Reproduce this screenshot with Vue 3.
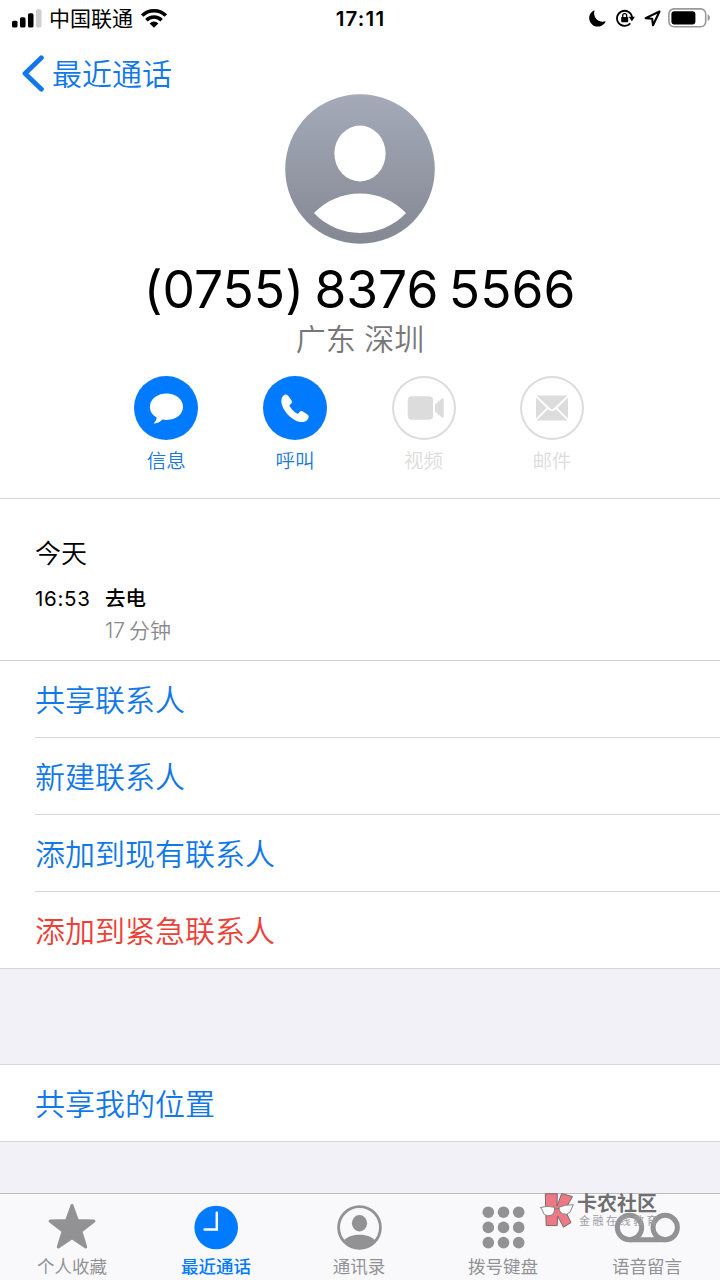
<template>
  <div class="phone">
    <header class="status">
      <div class="status-left">
        <svg class="signal" width="30" height="19" viewBox="0 0 30 19">
          <rect x="0" y="11.7" width="5.5" height="6.8" rx="1.6" />
          <rect x="8" y="8.3" width="5.5" height="10.2" rx="1.6" />
          <rect x="16" y="4.3" width="5.5" height="14.2" rx="1.6" />
          <rect x="24" y="0.2" width="5.5" height="18.3" rx="1.6" fill="#cfcfcf" />
        </svg>
        <span class="carrier">中国联通</span>
        <svg class="wifi" width="26" height="19" viewBox="0 0 26 19">
          <g fill="none" stroke="#000" stroke-width="3.5">
            <path d="M1.2 6.6A16.8 16.8 0 0 1 24.8 6.6" />
            <path d="M5.4 11.2A10.8 10.8 0 0 1 20.6 11.2" />
          </g>
          <path d="M13 18.8L8.6 14.4A6.2 6.2 0 0 1 17.4 14.4Z" />
        </svg>
      </div>
      <span class="clock">17:11</span>
      <div class="status-right">
        <svg width="17" height="17" viewBox="0 0 17 17">
          <path d="M5.6 0.3C2.4 1.5 0.2 4.5 0.2 8C0.2 12.8 4 16.6 8.8 16.6C12.4 16.6 15.5 14.5 16.7 11.3C9.8 13.6 3.2 7.4 5.6 0.3Z" />
        </svg>
        <svg class="lock" width="19" height="18" viewBox="0 0 19 18">
          <path d="M14.3 14.4A7.6 7.6 0 1 1 16.1 8.1" fill="none" stroke="#000" stroke-width="1.8" />
          <path d="M12.7 7.7H19L15.9 12.2Z" />
          <rect x="5.2" y="7.9" width="7" height="5.3" rx="0.7" />
          <path d="M6.7 8V6.7a2 2 0 0 1 4 0V8" fill="none" stroke="#000" stroke-width="1.3" />
        </svg>
        <svg class="arrow" width="17" height="17" viewBox="0 0 17 17">
          <path d="M15.5 1.5L1.6 8.1L8.2 8.8L9 15.3Z" fill="none" stroke="#000" stroke-width="2.1" stroke-linejoin="round" />
        </svg>
        <svg class="battery" width="43" height="20" viewBox="0 0 43 20">
          <rect x="0.9" y="0.9" width="36.8" height="17.8" rx="5" fill="none" stroke="#999" stroke-width="1.6" />
          <rect x="3.4" y="3.2" width="24" height="13.2" rx="3" />
          <path d="M39.6 6.5C42.7 7.4 42.7 12.2 39.6 13.1Z" fill="#999" />
        </svg>
      </div>
    </header>

    <nav class="back">
      <svg width="24" height="37" viewBox="0 0 24 37">
        <path d="M20.4 2.8L4 18.5L20.4 34.2" fill="none" stroke="#1278e8" stroke-width="4.8" stroke-linecap="round" stroke-linejoin="round" />
      </svg>
      <span>最近通话</span>
    </nav>

    <section class="profile">
      <svg class="avatar" width="150" height="150" viewBox="0 0 150 150">
        <defs>
          <linearGradient id="avatarFill" x1="0" y1="0" x2="0" y2="1">
            <stop offset="0" stop-color="#a5aab9" />
            <stop offset="1" stop-color="#848893" />
          </linearGradient>
        </defs>
        <circle cx="75" cy="75" r="74.8" fill="url(#avatarFill)" />
        <ellipse cx="75" cy="59.5" rx="25.6" ry="28" fill="#fff" />
        <path d="M29 119C54 93 96 93 121 119C96 145.5 54 145.5 29 119Z" fill="#fff" />
      </svg>
      <h1>(0755) 8376 5566</h1>
      <p class="region">广东 深圳</p>
      <div class="actions">
        <div v-for="item in actions" :key="item.icon" class="action" :class="{ disabled: item.disabled }">
          <div class="circle">
            <svg width="64" height="64" viewBox="0 0 64 64">
              <path
                v-if="item.icon === 'message'"
                d="M32.5 17.6C41.8 17.6 49 23.2 49 30.8C49 38.5 42 43.9 32.5 43.9C31 43.9 29.6 43.8 28.3 43.5C26.5 45.6 23.6 47.3 20.9 47.5C19.8 47.5 19.9 46.8 20.5 46.2C21.8 45 22.7 43.5 22.7 41.6C18.5 39.3 15.9 35.5 15.9 30.8C15.9 23.2 23.2 17.6 32.5 17.6Z"
              />
              <path
                v-else-if="item.icon === 'phone'"
                d="M20.8 19.2C22.6 18 24.2 18.5 25.4 20.1L28.4 24.3C29.4 25.8 29 27 27.9 27.9L26.9 28.7C26.3 29.2 26.4 29.8 26.8 30.5C28.6 33.3 30.9 35.6 33.9 37.4C34.6 37.8 35.2 37.8 35.6 37.2L36.5 36.1C37.3 35.1 38.5 34.7 39.9 35.6L44.4 38.6C46 39.7 46.1 41.2 45 42.9C43.4 45.2 41.2 46.1 38.7 46.1C30 46 18.4 34 18.4 25.5C18.4 23 18.8 20.7 20.8 19.2Z"
              />
              <g v-else-if="item.icon === 'video'">
                <rect x="15.7" y="20.3" width="25.4" height="23.4" rx="4" />
                <path d="M43 28.6L49.5 22.8C50.5 21.9 51.7 22.2 51.7 23.7V40.2C51.7 41.7 50.5 42.1 49.5 41.2L43 35.4Z" />
              </g>
              <g v-else>
                <rect x="16" y="19.6" width="32" height="24.9" rx="1" />
                <path
                  d="M15.5 19.8L29.5 33.2Q32 35.5 34.5 33.2L48.5 19.8M15.5 44.3L27.9 31.8M48.5 44.3L36.1 31.8"
                  fill="none"
                  stroke="#fff"
                  stroke-width="1.9"
                />
              </g>
            </svg>
          </div>
          <span>{{ item.label }}</span>
        </div>
      </div>
    </section>

    <section class="history">
      <h2>今天</h2>
      <div class="call">
        <span class="time">16:53</span>
        <div class="detail">
          <strong>去电</strong>
          <span class="duration">17<i></i>分钟</span>
        </div>
      </div>
    </section>

    <ul class="links">
      <li v-for="link in links" :key="link.label" :class="{ danger: link.danger }">{{ link.label }}</li>
    </ul>
    <div class="spacer"></div>
    <div class="location">共享我的位置</div>

    <footer class="tabs">
      <div v-for="tab in tabs" :key="tab.icon" class="tab" :class="{ active: tab.active }">
        <svg width="70" height="48" viewBox="0 0 70 48">
          <path
            v-if="tab.icon === 'star'"
            d="M35 2.5L40.4 17.6L56.9 18.1L43.9 28.2L48.7 44L35 34.7L21.3 44L26.1 28.2L13.1 18.1L29.6 17.6Z"
            stroke="currentColor"
            stroke-width="3"
            stroke-linejoin="round"
          />
          <g v-else-if="tab.icon === 'recent'">
            <circle cx="35.2" cy="24.5" r="21.8" />
            <path d="M35.8 9.8V26.4H23.6" fill="none" stroke="#fff" stroke-width="2.5" stroke-linecap="round" />
          </g>
          <g v-else-if="tab.icon === 'contacts'">
            <circle cx="34.5" cy="24.5" r="20.9" fill="none" stroke="currentColor" stroke-width="2.8" />
            <ellipse cx="34.5" cy="20.2" rx="7.6" ry="8.2" />
            <path d="M19.2 37C26.2 30 42.8 30 49.8 37C42.2 48.5 26.8 48.5 19.2 37Z" />
          </g>
          <g v-else-if="tab.icon === 'keypad'">
            <circle v-for="n in 9" :key="n" :cx="19.3 + ((n - 1) % 3) * 15.2" :cy="9.2 + Math.floor((n - 1) / 3) * 15.2" r="5.8" />
          </g>
          <g v-else fill="none" stroke="currentColor" stroke-width="5">
            <circle cx="16.5" cy="24.5" r="12.2" />
            <circle cx="52.2" cy="24.5" r="12.2" />
            <path d="M16.5 36.7H52.2" />
          </g>
        </svg>
        <span>{{ tab.label }}</span>
      </div>
    </footer>

    <div class="watermark">
      <svg width="34" height="37" viewBox="0 0 34 37">
        <path
          d="M5.3 1.8H17.3L17 14L21.7 1.6L32.5 4.6L24.8 18L31 30.5L23.5 35.2L17.6 24L17.2 33.6H6.2Z"
          fill="#ec7983"
          stroke="#79686d"
          stroke-width="1"
        />
        <path d="M0.5 15.5Q7 13.4 14.2 15.2Q15.6 18.2 13.6 21.3Q11.3 24.2 7.2 23.8Q2.8 22.8 2.3 18Z" fill="#fff" stroke="#777" stroke-width="0.9" />
        <path d="M19.2 15.2Q25 12.4 33.3 12.8L31.8 16Q31 21 26.6 22.2Q22 22.8 20 19.6Q18.8 17.3 19.2 15.2ZM15 17L19 16.3" fill="#fff" stroke="#777" stroke-width="0.9" />
      </svg>
      <div class="watermark-text">
        <b>卡农社区</b>
        <small>金融在线教育</small>
      </div>
    </div>
  </div>
</template>

<script setup>
const actions = [
  { icon: "message", label: "信息" },
  { icon: "phone", label: "呼叫" },
  { icon: "video", label: "视频", disabled: true },
  { icon: "mail", label: "邮件", disabled: true },
];

const links = [
  { label: "共享联系人" },
  { label: "新建联系人" },
  { label: "添加到现有联系人" },
  { label: "添加到紧急联系人", danger: true },
];

const tabs = [
  { icon: "star", label: "个人收藏" },
  { icon: "recent", label: "最近通话", active: true },
  { icon: "contacts", label: "通讯录" },
  { icon: "keypad", label: "拨号键盘" },
  { icon: "voicemail", label: "语音留言" },
];
</script>

<style>
body {
  margin: 0;
}
</style>

<style scoped>
.phone {
  position: relative;
  display: flex;
  flex-direction: column;
  width: 720px;
  height: 1280px;
  overflow: hidden;
  background: #f2f1f7;
  color: #000;
  font-family: Inter, "Noto Sans CJK SC", sans-serif;
  font-feature-settings: "calt" 0;
}
svg {
  display: block;
  flex: none;
}
h1,
h2,
p,
ul {
  margin: 0;
  padding: 0;
  font-weight: 400;
}
.status {
  display: grid;
  grid-template-columns: 1fr auto 1fr;
  align-items: center;
  height: 36px;
  padding: 0 9px 0 12px;
  background: #fff;
}
.status-left,
.status-right {
  display: flex;
  align-items: center;
}
.status-right {
  justify-content: flex-end;
}
.carrier {
  margin: 0 8px 0 7px;
  padding-top: 2px;
  font-size: 21px;
  line-height: 34px;
}
.clock {
  padding-right: 2px;
  font-size: 20.5px;
  font-weight: 600;
  letter-spacing: 1.2px;
}
.lock {
  margin-left: 10px;
}
.arrow {
  margin-left: 9px;
}
.battery {
  margin-left: 7px;
}
.back {
  display: flex;
  align-items: center;
  gap: 7px;
  height: 58px;
  padding: 16px 0 0 21px;
  box-sizing: border-box;
  background: #fff;
  color: #1278e8;
  font-size: 30px;
  font-weight: 350;
}
.back span {
  padding-top: 1px;
  line-height: 40px;
}
.profile {
  display: flex;
  flex-direction: column;
  align-items: center;
  height: 405px;
  box-sizing: border-box;
  border-bottom: 1px solid #d8d8da;
  background: #fff;
}
h1 {
  height: 76px;
  padding-right: 1px;
  font-size: 51.5px;
  line-height: 90px;
  white-space: nowrap;
  word-spacing: -4px;
}
.region {
  height: 56px;
  color: #77777a;
  font-size: 30px;
  font-weight: 350;
  line-height: 38px;
}
.actions {
  display: flex;
  gap: 64.6px;
  padding: 0.4px 1.6px 0 0;
}
.action {
  display: flex;
  flex-direction: column;
  align-items: center;
  width: 64px;
  color: #1a78d8;
  font-size: 19.5px;
  font-weight: 350;
}
.action span {
  line-height: 43px;
}
.circle {
  width: 64px;
  height: 64px;
  border-radius: 50%;
  background: #007aff;
}
.circle svg {
  fill: #fff;
}
.disabled {
  color: #dcdcdc;
}
.disabled .circle {
  background: #fff;
  box-shadow: inset 0 0 0 2px #dcdcdc;
}
.disabled svg {
  fill: #dcdcdc;
}
.history {
  height: 162px;
  padding: 34px 0 0 35px;
  box-sizing: border-box;
  border-bottom: 1px solid #d0d0d2;
  background: #fff;
}
h2 {
  font-size: 26px;
  font-weight: 350;
  line-height: 41px;
}
.call {
  display: flex;
  margin-top: 9px;
  font-size: 20.5px;
  line-height: 32px;
}
.time {
  width: 70px;
  letter-spacing: 0.7px;
}
.detail {
  display: flex;
  flex-direction: column;
}
.detail strong {
  font-weight: 500;
}
.duration {
  color: #8a8a8d;
  font-size: 21px;
  font-weight: 350;
}
.duration i {
  display: inline-block;
  width: 4px;
}
.links {
  height: 308px;
  box-sizing: border-box;
  border-bottom: 1px solid #d8d8da;
  background: #fff;
  list-style: none;
}
.links li {
  height: 77px;
  margin-left: 35px;
  box-sizing: border-box;
  border-bottom: 1px solid #d8d8da;
  color: #1278e8;
  font-size: 30px;
  font-weight: 350;
  line-height: 78px;
}
.links li:last-child {
  border-bottom: 0;
}
.links .danger {
  color: #ec4037;
}
.spacer {
  height: 95px;
}
.location {
  height: 78px;
  padding-left: 35px;
  box-sizing: border-box;
  border-top: 1px solid #d8d8da;
  border-bottom: 1px solid #d8d8da;
  background: #fff;
  color: #1278e8;
  font-size: 30px;
  font-weight: 350;
  line-height: 78px;
}
.tabs {
  display: flex;
  height: 87px;
  margin-top: auto;
  box-sizing: border-box;
  border-top: 1px solid #bcbcc0;
  background: #f9f9fb;
}
.tab {
  display: flex;
  flex: 1;
  flex-direction: column;
  align-items: center;
  padding-top: 9px;
  color: #929295;
  font-size: 17.5px;
}
.tab svg {
  fill: currentColor;
}
.tab span {
  line-height: 32px;
}
.tab:nth-child(n + 3) span {
  padding-right: 2px;
}
.active {
  color: #007aff;
}
.active span {
  font-weight: 500;
}
/* site mark laid over the tab bar */
.watermark {
  position: absolute;
  top: 1192px;
  left: 540px;
  display: flex;
  gap: 3px;
}
.watermark-text {
  display: flex;
  flex-direction: column;
  color: #6f6f72;
}
.watermark b {
  font-size: 20px;
  font-weight: 700;
  line-height: 25px;
}
.watermark small {
  padding-left: 2px;
  color: #a0a0a3;
  font-size: 11px;
  letter-spacing: 2.5px;
  line-height: 8px;
}
</style>
